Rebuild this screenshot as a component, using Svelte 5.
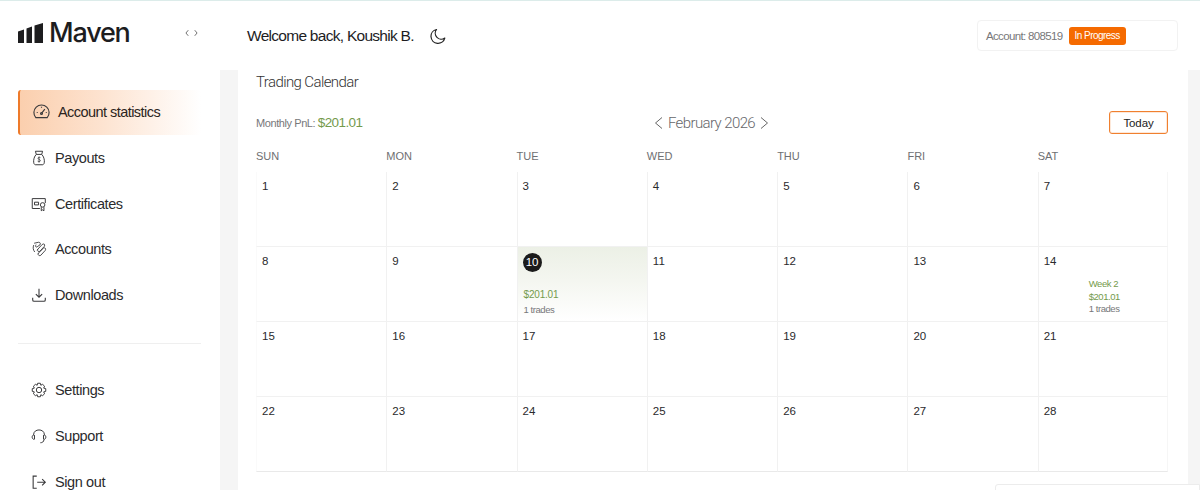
<script>
  const weekdays = ['SUN', 'MON', 'TUE', 'WED', 'THU', 'FRI', 'SAT'];
  const days = Array.from({ length: 28 }, (_, i) => i + 1);
</script>

<div class="page">
  <aside class="sidebar">
    <div class="brand">
      <svg class="logo" viewBox="0 0 25 20" width="25" height="20" aria-hidden="true">
        <path d="M0 8.500 L6 6.500 V20 H0 Z M8.500 5.500 L14 3.500 V20 H8.500 Z M16.500 2.500 L25 0 V20 H16.500 Z" fill="#1d1d1f" />
      </svg>
      <span class="brand-name">Maven</span>
      <svg class="collapse" viewBox="0 0 14 8" width="13" height="8" fill="none" stroke="#555" stroke-width="0.9">
        <path d="M3.500 1 L1 4 L3.500 7 M10.500 1 L13 4 L10.500 7" />
      </svg>
    </div>

    <nav class="nav">
      <a class="item active">
        <svg class="icon" viewBox="0 0 20 20" fill="none" stroke="currentColor" stroke-width="1.200">
          <path d="M4 16.500 A8 8 0 1 1 16 16.500 Z" stroke-linejoin="round" />
          <path d="M10 12 L13.500 7.500 M5 11 H6 M14.500 11 H15.500 M10 5 V6" />
          <circle cx="10" cy="12" r="1" />
        </svg>
        <span>Account statistics</span>
      </a>
      <a class="item">
        <svg class="icon" viewBox="0 0 20 20" fill="none" stroke="currentColor" stroke-width="1.100">
          <path d="M7 6 L6 2.500 H14 L13 6 Z M7 6 C3.500 9 3 17.500 6 17.500 H14 C17 17.500 16.500 9 13 6" stroke-linejoin="round" />
          <path d="M11.500 9.500 C10 8.700 8.500 9.500 9 10.700 C9.500 11.800 11.500 11.500 11.500 13 C11.300 14.300 9.500 14.300 8.500 13.500 M10 8.500 V15" stroke-width="0.900" />
        </svg>
        <span>Payouts</span>
      </a>
      <a class="item">
        <svg class="icon" viewBox="0 0 20 20" fill="none" stroke="currentColor" stroke-width="1.100">
          <path d="M11 15 H2.500 V4 H17 V9" />
          <path d="M5 8 H9.500 V11 H5 Z" />
          <circle cx="14" cy="11" r="2.500" />
          <path d="M12.500 13.500 V17.500 L14 16.500 L15.500 17.500 V13.500" />
        </svg>
        <span>Certificates</span>
      </a>
      <a class="item">
        <svg class="icon" viewBox="0 0 20 20" fill="none" stroke="currentColor" stroke-width="1">
          <path d="M5 3.500 L9.500 2.500 C11.500 2.500 12 4 11 5.500 L8 7.500 C6.500 8.500 5.500 7 6.500 5.500 M4 6 C3 8.500 3.500 11 5 13 M8 11 L13.500 5 C15.500 3.500 17 5 16 7 L11 12.500 C9.500 13.500 8 12.500 8.500 11 M9 15 L15 9 C17 8 18 10 17 11.500 L12 17 C10.500 18 8.500 17 9 15" stroke-linecap="round" stroke-linejoin="round" />
        </svg>
        <span>Accounts</span>
      </a>
      <a class="item">
        <svg class="icon" viewBox="0 0 20 20" fill="none" stroke="currentColor" stroke-width="1.200">
          <path d="M10 3 V12.500 M6.500 9 L10 12.500 L13.500 9 M3 13 V15.500 Q3 17 4.500 17 H15.500 Q17 17 17 15.500 V13" />
        </svg>
        <span>Downloads</span>
      </a>
    </nav>

    <hr class="divider" />

    <nav class="nav">
      <a class="item">
        <svg class="icon" viewBox="0 0 20 20" fill="none" stroke="currentColor" stroke-width="1.100">
          <circle cx="10" cy="10" r="3" />
          <path d="M8.500 2.500 H11.500 L12 4.700 L14 3.700 L16.200 5.800 L15.200 7.900 L17.500 8.500 V11.500 L15.200 12.100 L16.200 14.200 L14 16.300 L12 15.300 L11.500 17.500 H8.500 L8 15.300 L6 16.300 L3.800 14.200 L4.800 12.100 L2.500 11.500 V8.500 L4.800 7.900 L3.800 5.800 L6 3.700 L8 4.700 Z" stroke-linejoin="round" />
        </svg>
        <span>Settings</span>
      </a>
      <a class="item">
        <svg class="icon" viewBox="0 0 20 20" fill="none" stroke="currentColor" stroke-width="1.100">
          <path d="M4 9 V8.500 C4 1.500 16 1.500 16 8.500 V9 M4.500 8.500 C3 9 2 10.500 2.500 12 C3 13.500 4 14 5 13.500 V9 M15.500 8.500 C17 9 18 10.500 17.500 12 C17 13.500 16 14 15 13.500 V9 M15.500 14 C15.500 16.500 13.500 17.500 11.500 17.500" />
        </svg>
        <span>Support</span>
      </a>
      <a class="item">
        <svg class="icon" viewBox="0 0 20 20" fill="none" stroke="currentColor" stroke-width="1.200">
          <path d="M7.500 3.500 H3.500 V17 H7.500 M8 10.200 H17 M13.500 6.700 L17 10.200 L13.500 13.700" />
        </svg>
        <span>Sign out</span>
      </a>
    </nav>
  </aside>

  <div class="main">
    <header class="topbar">
      <div class="welcome">
        <h1>Welcome back, Koushik B.</h1>
        <svg class="moon" viewBox="0 0 16 16" width="16" height="16" fill="none" stroke="#222" stroke-width="1.200">
          <path d="M6.500 1.500 A7 7 0 1 0 14.800 10 A6 6 0 0 1 6.500 1.500 Z" stroke-linejoin="round" />
        </svg>
      </div>
      <div class="account">
        <span>Account: 808519</span>
        <span class="badge">In Progress</span>
      </div>
    </header>

    <div class="content">
      <section class="card">
        <h2>Trading Calendar</h2>
        <div class="toolbar">
          <div class="pnl">Monthly PnL: <strong>$201.01</strong></div>
          <div class="month">
            <svg viewBox="0 0 9 14" width="9" height="14" fill="none" stroke="#666" stroke-width="1"><path d="M8 1.500 L1.500 7 L8 12.500" /></svg>
            <span>February 2026</span>
            <svg viewBox="0 0 9 14" width="9" height="14" fill="none" stroke="#666" stroke-width="1"><path d="M1 1.500 L7.500 7 L1 12.500" /></svg>
          </div>
          <button class="today">Today</button>
        </div>

        <div class="weekdays">
          {#each weekdays as day}
            <div>{day}</div>
          {/each}
        </div>

        <div class="grid">
          {#each days as day}
            <div class="cell" class:current={day === 10}>
              {#if day === 10}
                <span class="num today-num">{day}</span>
                <div class="stat">
                  <span class="profit">$201.01</span>
                  <span class="trades">1 trades</span>
                </div>
              {:else}
                <span class="num">{day}</span>
              {/if}
              {#if day === 14}
                <div class="week">
                  <span class="profit">Week 2</span>
                  <span class="profit">$201.01</span>
                  <span class="trades">1 trades</span>
                </div>
              {/if}
            </div>
          {/each}
        </div>
      </section>
      <div class="next-card"></div>
    </div>
  </div>
</div>

<style>
  :global(body) {
    font-family: 'Liberation Sans', Arial, sans-serif;
    color: #1d1d1f;
    background: #fff;
  }

  .page {
    display: flex;
    height: 490px;
    overflow: hidden;
    border-top: 1px solid #dcecea;
    box-sizing: border-box;
  }

  .sidebar {
    width: 220px;
    flex: none;
    box-sizing: border-box;
    padding: 14px 19px 0 18px;
  }

  .brand {
    display: flex;
    align-items: center;
    height: 36px;
    margin-bottom: 39px;
  }

  .logo {
    margin-right: 6px;
  }

  .brand-name {
    font-family: Inter, sans-serif;
    font-size: 27px;
    font-weight: 500;
    letter-spacing: -1.2px;
    line-height: 36px;
  }

  .collapse {
    margin-left: auto;
    margin-right: 3px;
  }

  .nav {
    display: flex;
    flex-direction: column;
  }

  .item {
    display: flex;
    align-items: center;
    gap: 7px;
    height: 45.800px;
    padding-left: 12px;
    font-size: 14.500px;
    letter-spacing: -0.4px;
    color: #2b2b2d;
  }

  .item .icon {
    width: 18px;
    height: 18px;
    flex: none;
    color: #3a3a3c;
  }

  .item.active {
    height: 45px;
    padding-left: 12px;
    padding-bottom: 2px;
    box-sizing: border-box;
    gap: 7px;
    border-left: 2px solid #ee7a2a;
    border-radius: 3px;
    background: linear-gradient(90deg, #fbcfae 0%, #fde3d0 45%, #ffffff 100%);
    color: #2b2420;
    letter-spacing: -0.55px;
  }

  .item.active .icon {
    width: 19px;
    height: 19px;
  }

  .divider {
    border: none;
    border-top: 1px solid #efefef;
    margin: 25px 0 23px;
  }

  .main {
    flex: 1;
    min-width: 0;
    display: flex;
    flex-direction: column;
  }

  .topbar {
    height: 69px;
    flex: none;
    display: flex;
    align-items: center;
    justify-content: space-between;
    padding: 0 22px 0 27px;
  }

  .welcome {
    display: flex;
    align-items: center;
    gap: 16px;
  }

  h1 {
    margin: 0;
    font-size: 15.500px;
    font-weight: 400;
    letter-spacing: -0.72px;
  }

  .account {
    width: 201px;
    height: 31px;
    box-sizing: border-box;
    border: 1px solid #f2f2f2;
    border-radius: 4px;
    display: flex;
    align-items: center;
    gap: 6px;
    padding-left: 8px;
    font-size: 11.500px;
    letter-spacing: -0.65px;
    color: #77777a;
  }

  .badge {
    background: #f56a00;
    color: #fff;
    font-size: 10px;
    letter-spacing: -0.55px;
    border-radius: 3px;
    padding: 0 6px;
    line-height: 18px;
  }

  .content {
    flex: 1;
    background: #f5f5f5;
    padding-left: 18px;
    padding-right: 12px;
    position: relative;
  }

  .card {
    background: #fff;
    height: 100%;
    box-sizing: border-box;
    padding: 0 20px 0 18px;
  }

  h2 {
    margin: 0;
    font-family: Roboto, sans-serif;
    font-size: 15px;
    font-weight: 300;
    letter-spacing: -0.6px;
    line-height: 25px;
    color: #333;
  }

  .toolbar {
    display: grid;
    grid-template-columns: 1fr auto 1fr;
    align-items: center;
    height: 24px;
    margin-top: 15px;
  }

  .pnl {
    font-size: 11px;
    letter-spacing: -0.42px;
    color: #77777a;
  }

  .pnl strong {
    font-size: 13.500px;
    font-weight: 400;
    letter-spacing: -0.6px;
    color: #749a4c;
  }

  .month {
    display: flex;
    align-items: center;
    gap: 5px;
    margin-top: 1px;
    margin-right: 1px;
    font-family: Roboto, sans-serif;
    font-size: 15px;
    font-weight: 300;
    letter-spacing: -0.6px;
    color: #66666a;
  }

  .today {
    justify-self: end;
    width: 59px;
    height: 23px;
    margin-top: 1px;
    background: #fff;
    border: 1px solid #f0802f;
    box-shadow: inset 0 0 0 1px #fde8d9;
    border-radius: 3px;
    font-family: inherit;
    font-size: 11.500px;
    letter-spacing: -0.1px;
    color: #222;
    padding: 0;
  }

  .weekdays {
    display: grid;
    grid-template-columns: repeat(7, 1fr);
    height: 22px;
    margin-top: 11px;
    font-size: 11px;
    line-height: 22px;
    color: #6f6f72;
  }

  .grid {
    display: grid;
    grid-template-columns: repeat(7, 1fr);
    grid-auto-rows: 75px;
    margin-top: 5px;
  }

  .cell {
    position: relative;
    box-sizing: border-box;
    border-left: 1px solid #f1f1f1;
    border-bottom: 1px solid #f1f1f1;
    padding: 7px 5px;
  }

  .cell:nth-child(7n + 1) {
    border-left-color: #fafafa;
  }

  .cell:nth-child(7n) {
    border-right: 1px solid #f6f6f6;
  }

  .cell:nth-last-child(-n + 7) {
    border-bottom-color: #e9e9e9;
  }

  .num {
    font-size: 11.500px;
    line-height: 14px;
    color: #2a2a2c;
    display: block;
  }

  .cell.current {
    background: linear-gradient(180deg, #ecf0e6 0%, #f4f6f0 45%, #ffffff 100%);
  }

  .today-num {
    width: 19px;
    height: 19px;
    line-height: 19px;
    margin-top: -1px;
    border-radius: 50%;
    background: #1b1b1b;
    color: #fff;
    text-align: center;
  }

  .stat {
    display: flex;
    flex-direction: column;
    gap: 2.500px;
    margin-top: 17px;
    margin-left: 1px;
  }

  .stat .trades {
    font-size: 9.500px;
    letter-spacing: -0.45px;
  }

  .week {
    position: absolute;
    left: 50px;
    top: 31px;
    display: flex;
    flex-direction: column;
  }

  .week span {
    font-size: 9.500px;
    letter-spacing: -0.45px;
  }

  .profit {
    font-size: 10px;
    line-height: 12.500px;
    letter-spacing: -0.2px;
    color: #749a4c;
  }

  .trades {
    font-size: 10px;
    line-height: 12.500px;
    letter-spacing: -0.2px;
    color: #77777a;
  }

  .next-card {
    position: absolute;
    left: 775px;
    right: 0;
    top: 414px;
    height: 20px;
    background: #fff;
    border: 1px solid #ececec;
    border-radius: 3px 0 0 0;
  }
</style>
